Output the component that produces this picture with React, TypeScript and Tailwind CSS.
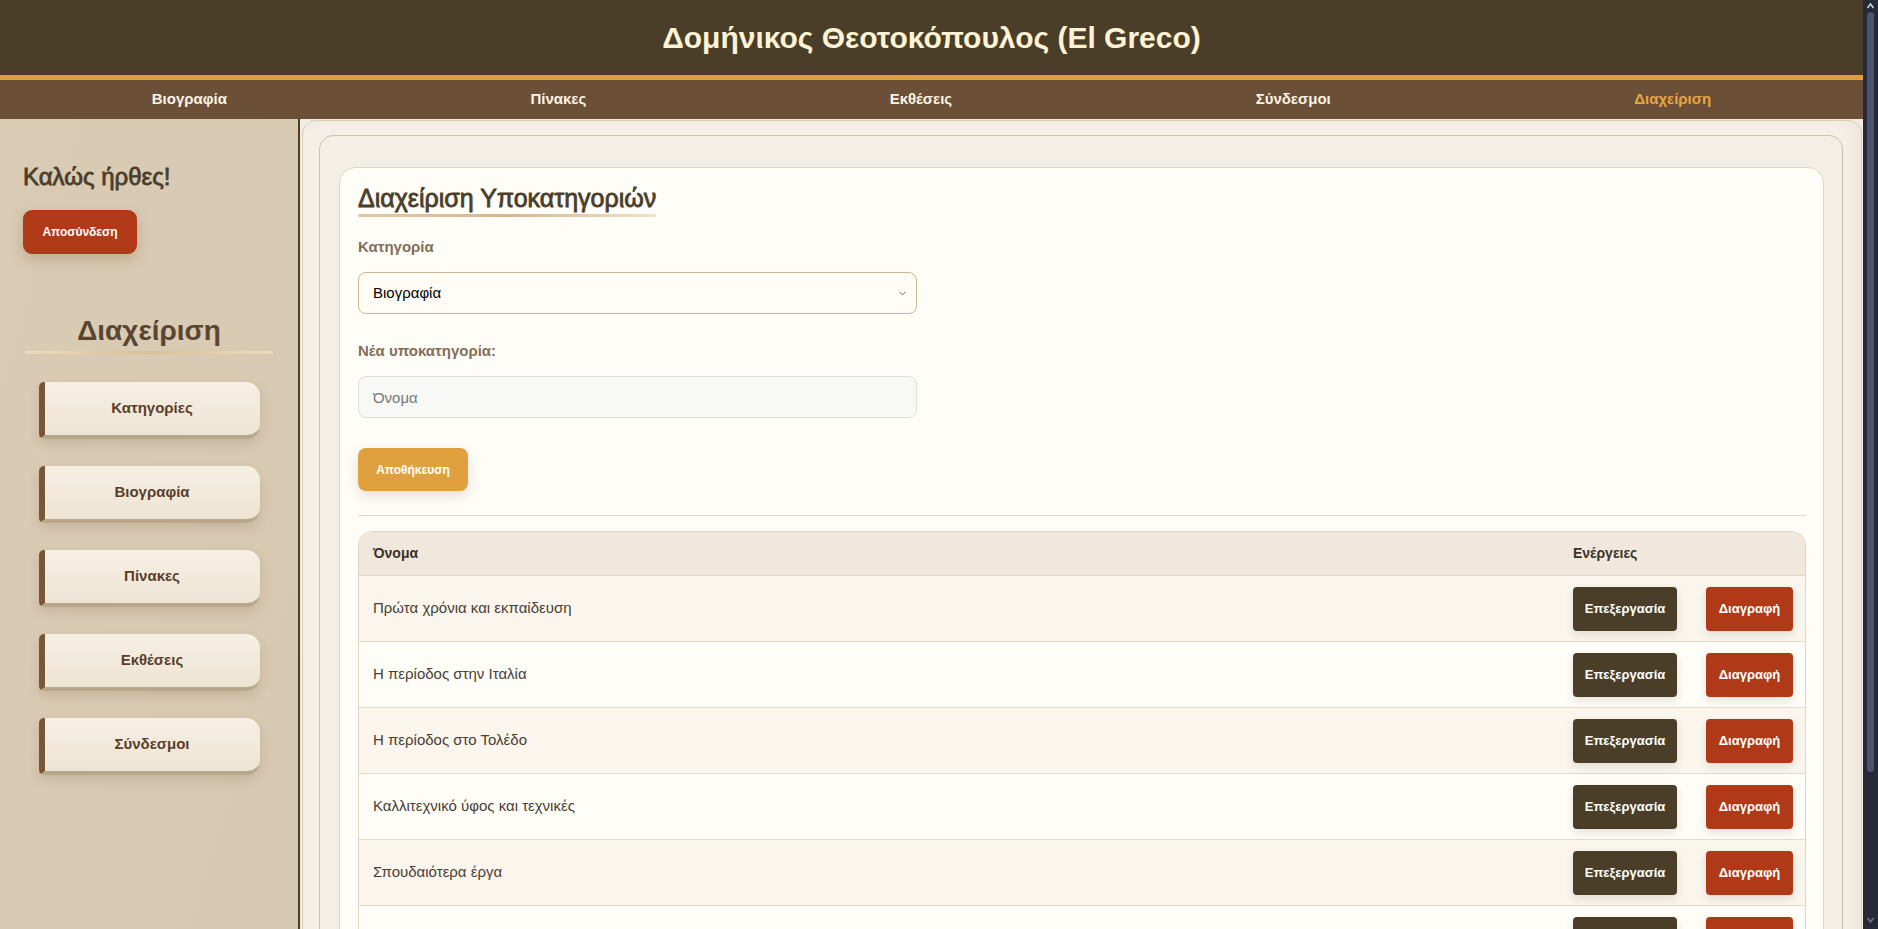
import { ChevronDown } from 'lucide-react'

const navItems = ['Βιογραφία', 'Πίνακες', 'Εκθέσεις', 'Σύνδεσμοι', 'Διαχείριση']

const sideItems = ['Κατηγορίες', 'Βιογραφία', 'Πίνακες', 'Εκθέσεις', 'Σύνδεσμοι']

const subcategories = [
  'Πρώτα χρόνια και εκπαίδευση',
  'Η περίοδος στην Ιταλία',
  'Η περίοδος στο Τολέδο',
  'Καλλιτεχνικό ύφος και τεχνικές',
  'Σπουδαιότερα έργα',
  'Θάνατος και κληρονομιά',
  'Επιρροή στη σύγχρονη τέχνη',
]

function Sidebar() {
  return (
    <aside className="w-[300px] shrink-0 border-r-2 border-[#4a3e2a] bg-gradient-to-br from-[#dacbb5] to-[#d7c8b1] px-[23px] pt-[44px] pb-10">
      <h2 className="text-[24px] leading-[28px] text-[#4a3e2a] [-webkit-text-stroke:0.8px_#4a3e2a]">Καλώς ήρθες!</h2>
      <button className="mt-[19px] h-[44px] w-[114px] rounded-[9px] bg-[#b03a18] text-[12px] font-bold text-white shadow-[0_5px_14px_rgba(120,70,30,0.25)]">
        Αποσύνδεση
      </button>

      <h2 className="mt-[61px] text-center text-[28px] leading-[32px] font-bold text-[#5a4530]">Διαχείριση</h2>
      <div className="mx-[2px] mt-[4px] h-[3px] rounded-full bg-gradient-to-r from-[#ecdcbd] via-[#d9bf95] to-[#ecdcbd]" />

      <div className="mt-[28px] flex flex-col gap-[27px]">
        {sideItems.map((item) => (
          <button
            key={item}
            className="mx-auto flex h-[57px] w-[221px] items-center justify-center rounded-l-[5px] rounded-r-[14px] border-l-[6px] border-b-4 border-l-[#7a5638] border-b-[#b9a78c] bg-gradient-to-b from-[#f6efe3] to-[#eee4d4] pb-px text-[15px] font-bold text-[#5a3e2a] shadow-[0_5px_12px_rgba(90,60,30,0.14)]"
          >
            {item}
          </button>
        ))}
      </div>
    </aside>
  )
}

function SubcategoryTable() {
  return (
    <div className="mt-[15px] overflow-hidden rounded-t-[14px] border border-[#e2d6c2]">
      <div className="flex h-[44px] items-center border-b border-[#e2d6c2] bg-[#f0e8dc] text-[14px] font-bold text-[#3b3128]">
        <div className="flex-1 pl-[14px]">Όνομα</div>
        <div className="w-[247px] pl-[15px]">Ενέργειες</div>
      </div>
      {subcategories.map((name, i) => (
        <div
          key={name}
          className={`flex h-[66px] items-center border-b border-[#e6dbc8] ${i % 2 === 0 ? 'bg-[#faf6ee]' : 'bg-[#fffdf8]'}`}
        >
          <div className="flex-1 pl-[14px] text-[15px] text-[#4a3e35]">{name}</div>
          <div className="flex w-[247px] items-center gap-[29px] pl-[15px]">
            <button className="h-[44px] w-[104px] rounded-[4px] bg-[#4a3e28] text-[13px] font-bold text-white shadow-[0_4px_10px_rgba(60,40,20,0.12)]">
              Επεξεργασία
            </button>
            <button className="h-[44px] w-[87px] rounded-[4px] bg-[#b03a18] text-[13px] font-bold text-white shadow-[0_4px_10px_rgba(60,40,20,0.12)]">
              Διαγραφή
            </button>
          </div>
        </div>
      ))}
    </div>
  )
}

// dark scrollbar like the one in the screenshot
function FakeScrollbar() {
  return (
    <div className="relative w-[15px] shrink-0 bg-[#262a38]">
      <svg className="absolute top-[3px] left-[4px] h-[6px] w-[7px]" viewBox="0 0 7 6">
        <path d="M0.5 5 L3.5 1 L6.5 5" fill="none" stroke="#c9cbd3" strokeWidth="1.6" />
      </svg>
      <div className="absolute top-[12px] left-[4px] h-[760px] w-[7px] rounded-full bg-[#4d5270]" />
      <svg className="absolute bottom-[6px] left-[4px] h-[6px] w-[7px]" viewBox="0 0 7 6">
        <path d="M0.5 1 L3.5 5 L6.5 1" fill="none" stroke="#6f7283" strokeWidth="1.6" />
      </svg>
    </div>
  )
}

export default function App() {
  return (
    <div className="flex h-screen font-['Liberation_Sans',Arial,sans-serif]">
      <div className="min-w-0 flex-1 overflow-y-auto bg-[#f1ece3] [scrollbar-width:none]">
        <header className="flex h-[75px] items-center justify-center bg-[#4a3e29]">
          <h1 className="text-[30px] font-bold text-[#fff3d6]">Δομήνικος Θεοτοκόπουλος (El Greco)</h1>
        </header>
        <nav className="flex h-[44px] items-center justify-around border-t-[5px] border-[#e0a03e] bg-[#6b4f36]">
          {navItems.map((item) => (
            <a
              key={item}
              href="#"
              className={`text-[15px] font-bold ${item === 'Διαχείριση' ? 'text-[#e8a542]' : 'text-[#fdf4e3]'}`}
            >
              {item}
            </a>
          ))}
        </nav>

        <div className="flex">
          <Sidebar />

          <main className="min-w-0 flex-1 pt-px pr-px pl-[2px] pb-3">
            <div className="rounded-[14px] border border-[#d9ccb2] bg-[#f4f0e8] pt-[14px] pr-[18px] pb-4 pl-4 shadow-[inset_-8px_0_12px_rgba(200,185,160,0.15)]">
              <div className="rounded-[14px] border border-[#cfc2a8] bg-[#f3efe6] pt-[31px] pr-[18px] pb-4 pl-[19px]">
                <div className="rounded-[16px] border border-[#e2d5bc] bg-[#fffdf8] pt-[16px] pr-[17px] pb-5 pl-[18px]">
                  <div className="inline-block">
                    <h2 className="text-[25px] leading-[28px] text-[#4a3e2a] [-webkit-text-stroke:0.8px_#4a3e2a]">Διαχείριση Υποκατηγοριών</h2>
                    <div className="mt-[2px] h-[3px] rounded-full bg-gradient-to-r from-[#e0c9a2] via-[#d4b98e] to-[#f0e2c6]" />
                  </div>

                  <label className="mt-[21px] block text-[15px] leading-[18px] font-bold text-[#836e58]">Κατηγορία</label>
                  <div className="relative mt-[16px] w-[559px]">
                    <select className="h-[42px] w-full appearance-none rounded-[8px] border border-[#cdb78f] bg-[#fffdf6] pl-[14px] text-[15px] text-black">
                      <option>Βιογραφία</option>
                    </select>
                    <ChevronDown className="pointer-events-none absolute top-[16px] right-[9px] h-[11px] w-[11px] text-[#555]" strokeWidth={2} />
                  </div>

                  <label className="mt-[28px] block text-[15px] leading-[18px] font-bold text-[#836e58]">Νέα υποκατηγορία:</label>
                  <input
                    placeholder="Όνομα"
                    className="mt-[16px] block h-[42px] w-[559px] rounded-[8px] border border-[#e0ddd6] bg-[#f8f8f6] pl-[14px] text-[15px] placeholder:text-[#777]"
                  />

                  <button className="mt-[30px] h-[43px] w-[110px] rounded-[8px] bg-[#e0a03e] text-[12px] font-bold text-white shadow-[0_5px_14px_rgba(0,0,0,0.12)]">
                    Αποθήκευση
                  </button>

                  <div className="mt-[24px] h-px bg-[#e2d7c4]" />

                  <SubcategoryTable />
                </div>
              </div>
            </div>
          </main>
        </div>
      </div>
      <FakeScrollbar />
    </div>
  )
}
